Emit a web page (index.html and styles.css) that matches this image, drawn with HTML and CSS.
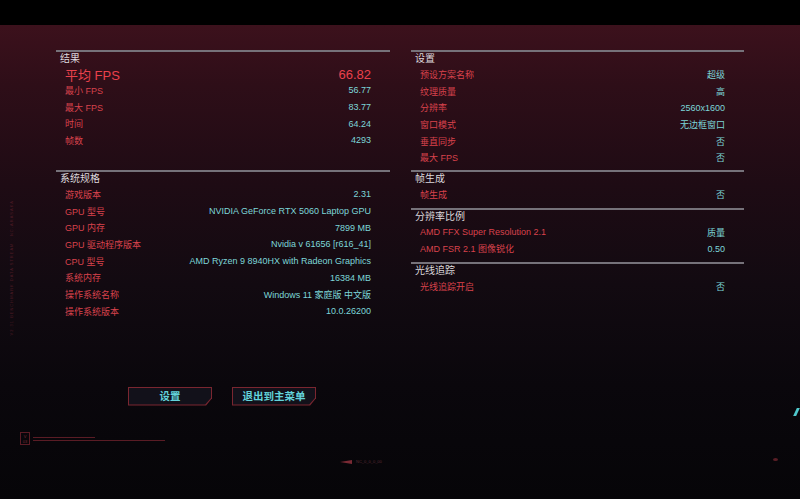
FILE: index.html
```html
<!DOCTYPE html>
<html lang="zh-CN">
<head>
<meta charset="utf-8">
<title>基准测试结果</title>
<link rel="stylesheet" href="styles.css">
</head>
<body>
<div class="topbar"></div>
<div class="screen">
  <div class="columns">
    <div class="col">
      <section class="sec sec-tall">
        <div class="hdr">结果</div>
        <div class="row big"><span class="lbl">平均 FPS</span><span class="val">66.82</span></div>
        <div class="row"><span class="lbl">最小 FPS</span><span class="val">56.77</span></div>
        <div class="row"><span class="lbl">最大 FPS</span><span class="val">83.77</span></div>
        <div class="row"><span class="lbl">时间</span><span class="val">64.24</span></div>
        <div class="row"><span class="lbl">帧数</span><span class="val">4293</span></div>
      </section>
      <section class="sec">
        <div class="hdr">系统规格</div>
        <div class="row"><span class="lbl">游戏版本</span><span class="val">2.31</span></div>
        <div class="row"><span class="lbl">GPU 型号</span><span class="val">NVIDIA GeForce RTX 5060 Laptop GPU</span></div>
        <div class="row"><span class="lbl">GPU 内存</span><span class="val">7899 MB</span></div>
        <div class="row"><span class="lbl">GPU 驱动程序版本</span><span class="val">Nvidia v 61656 [r616_41]</span></div>
        <div class="row"><span class="lbl">CPU 型号</span><span class="val">AMD Ryzen 9 8940HX with Radeon Graphics</span></div>
        <div class="row"><span class="lbl">系统内存</span><span class="val">16384 MB</span></div>
        <div class="row"><span class="lbl">操作系统名称</span><span class="val">Windows 11 家庭版 中文版</span></div>
        <div class="row"><span class="lbl">操作系统版本</span><span class="val">10.0.26200</span></div>
      </section>
    </div>
    <div class="col">
      <section class="sec sec-tall">
        <div class="hdr">设置</div>
        <div class="row"><span class="lbl">预设方案名称</span><span class="val">超级</span></div>
        <div class="row"><span class="lbl">纹理质量</span><span class="val">高</span></div>
        <div class="row"><span class="lbl">分辨率</span><span class="val">2560x1600</span></div>
        <div class="row"><span class="lbl">窗口模式</span><span class="val">无边框窗口</span></div>
        <div class="row"><span class="lbl">垂直同步</span><span class="val">否</span></div>
        <div class="row"><span class="lbl">最大 FPS</span><span class="val">否</span></div>
      </section>
      <section class="sec">
        <div class="hdr">帧生成</div>
        <div class="row"><span class="lbl">帧生成</span><span class="val">否</span></div>
      </section>
      <section class="sec">
        <div class="hdr">分辨率比例</div>
        <div class="row"><span class="lbl">AMD FFX Super Resolution 2.1</span><span class="val">质量</span></div>
        <div class="row"><span class="lbl">AMD FSR 2.1 图像锐化</span><span class="val">0.50</span></div>
      </section>
      <section class="sec">
        <div class="hdr">光线追踪</div>
        <div class="row"><span class="lbl">光线追踪开启</span><span class="val">否</span></div>
      </section>
    </div>
  </div>

  <div class="actions">
    <div class="btn"><div class="btn-in">设置</div></div>
    <div class="btn"><div class="btn-in">退出到主菜单</div></div>
  </div>

  <div class="deco-side">V2.31 BENCHMARK DATA STREAM · NC-ARASAKA</div>
  <div class="deco-ver">
    <div class="ver-box">V<br>03</div>
    <div class="ver-lines"><i class="l1"></i><i class="l2"></i></div>
  </div>
  <div class="deco-arrow"><i class="arr"></i><span>NC_0_0_0_00</span></div>
  <div class="deco-cyan"></div>
  <div class="deco-dot"></div>
</div>
</body>
</html>
```

FILE: styles.css
```css
html, body {
  margin: 0;
  padding: 0;
  background: #000;
}
body {
  width: 800px;
  height: 499px;
  overflow: hidden;
  font-family: "Liberation Sans", "Noto Sans CJK SC", sans-serif;
}
.topbar {
  height: 25px;
  background: #000;
}
.screen {
  position: relative;
  height: 474px;
  box-sizing: border-box;
  padding: 25px 56px 0 56px;
  background: linear-gradient(180deg, #3c111c 0px, #2e0e18 60px, #1e0b14 160px, #120a11 260px, #0a070c 360px, #060508 474px);
}
.columns {
  display: grid;
  grid-template-columns: 334px 333px;
  column-gap: 21px;
  align-items: start;
}
.sec {
  border-top: 2px solid #76727a;
  padding-bottom: 5px;
}
.sec-tall {
  box-sizing: border-box;
  height: 120px;
}
.hdr {
  height: 14px;
  line-height: 14px;
  padding-left: 4px;
  font-size: 10px;
  color: #dcd8dc;
}
.row {
  display: flex;
  justify-content: space-between;
  align-items: center;
  height: 16.7px;
  padding: 0 19px 0 9px;
  font-size: 9px;
}
.row.big {
  height: 16px;
  font-size: 13px;
}
.lbl {
  color: #d8424c;
}
.row.big .lbl, .row.big .val {
  color: #ea414c;
}
.val {
  color: #7dd6d8;
}
.actions {
  display: flex;
  gap: 20px;
  margin: 62px 0 0 72px;
}
.btn {
  width: 84px;
  height: 19px;
  background: #7a2630;
  clip-path: polygon(0 0, 100% 0, 100% 62%, 93% 100%, 0 100%);
}
.btn-in {
  position: relative;
  top: 1px;
  left: 1px;
  width: 82px;
  height: 17px;
  background: #12111a;
  clip-path: polygon(0 0, 100% 0, 100% 62%, 93% 100%, 0 100%);
  color: #63d3db;
  font-size: 10.5px;
  font-weight: bold;
  line-height: 17px;
  text-align: center;
}
.deco-side {
  position: absolute;
  left: 9px;
  top: 175px;
  width: 10px;
  writing-mode: vertical-rl;
  transform: rotate(180deg);
  font-size: 4px;
  letter-spacing: 1px;
  color: #4a1a24;
}
.deco-ver {
  position: absolute;
  left: 20px;
  top: 407px;
  display: flex;
  gap: 3px;
  align-items: center;
}
.ver-box {
  width: 10px;
  height: 13px;
  border: 1px solid #5a1c25;
  font-size: 4px;
  line-height: 5px;
  color: #7a2a34;
  text-align: center;
  box-sizing: border-box;
  padding-top: 1px;
}
.ver-lines {
  display: flex;
  flex-direction: column;
  gap: 2px;
}
.ver-lines i {
  display: block;
  height: 1px;
  background: #5a1c25;
}
.ver-lines .l1 { width: 62px; }
.ver-lines .l2 { width: 132px; }
.deco-arrow {
  position: absolute;
  left: 340px;
  top: 434px;
  display: flex;
  align-items: center;
  gap: 4px;
}
.arr {
  display: block;
  width: 0;
  height: 0;
  border-top: 2px solid transparent;
  border-bottom: 2px solid transparent;
  border-right: 12px solid #7a2a34;
}
.deco-arrow span {
  font-size: 4px;
  color: #5a2a34;
}
.deco-cyan {
  position: absolute;
  left: 795px;
  top: 383px;
  width: 3px;
  height: 8px;
  background: #4fc8cc;
  transform: skewX(-25deg);
}
.deco-dot {
  position: absolute;
  left: 773px;
  top: 433px;
  width: 5px;
  height: 3px;
  border-radius: 50%;
  background: #5a1e26;
}
```
